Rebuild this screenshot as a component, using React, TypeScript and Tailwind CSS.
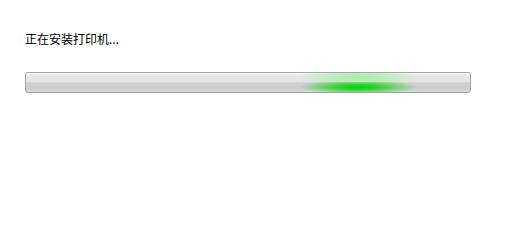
import React from "react";

export default function App() {
  return (
    <div className="w-[506px] h-[208px] bg-white">
      <div className="pl-[25px] pt-[31px] flex flex-col">
        <div className="text-[12px] leading-[16px] text-black font-['Noto_Sans_CJK_SC','Noto_Sans',sans-serif]">
          正在安装打印机...
        </div>
        <div className="mt-[25px] relative w-[446px] h-[21px] rounded-[3px] border border-[#a3a3a3] overflow-hidden bg-[linear-gradient(to_bottom,#f6f6f6_0%,#e9e9e9_10%,#e3e3e3_45%,#d2d2d2_52%,#cccccc_78%,#d9d9d9_100%)]">
          <div className="absolute inset-x-0 top-0 h-px bg-[#fbfbfb]" />
          <div className="absolute top-0 bottom-0 left-[272px] w-[120px] flex flex-col">
            <div className="h-[9px] bg-[radial-gradient(ellipse_50%_140%_at_center,rgba(165,240,165,0.95)_0%,rgba(175,240,175,0.65)_55%,rgba(180,240,180,0)_100%)]" />
            <div className="flex-1 bg-[radial-gradient(ellipse_50%_75%_at_center,#00d400_0%,rgba(0,210,0,0.75)_35%,rgba(40,210,40,0)_100%)]" />
          </div>
        </div>
      </div>
    </div>
  );
}
